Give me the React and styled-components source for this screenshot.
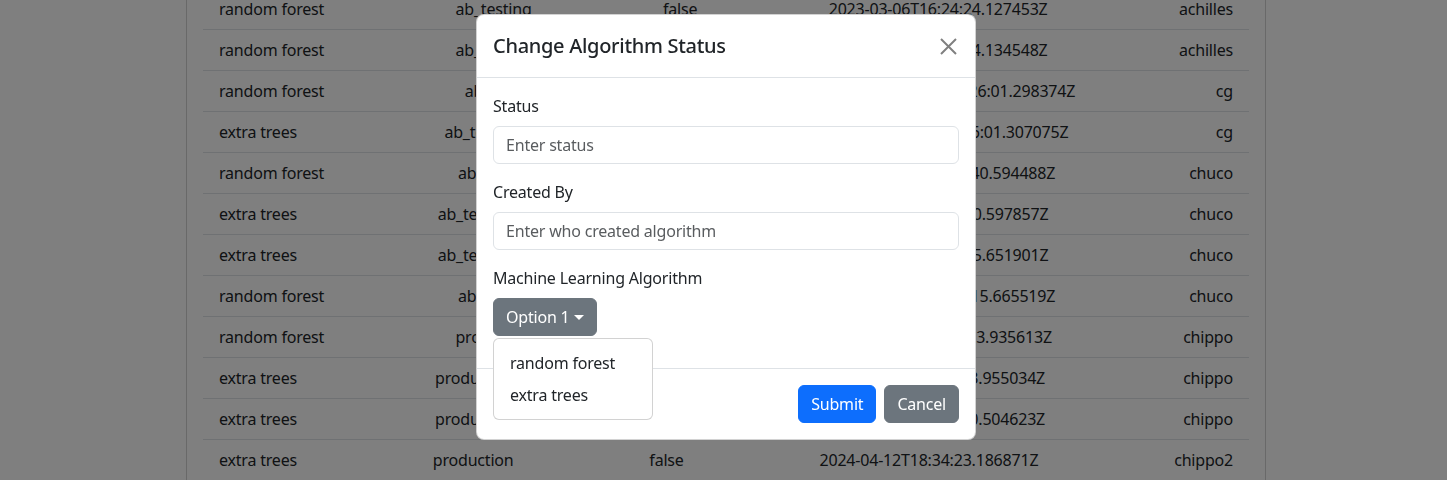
import styled, { createGlobalStyle } from 'styled-components';

const FONT = '"Noto Sans", "Liberation Sans", sans-serif';

const GlobalStyle = createGlobalStyle`
  * { box-sizing: border-box; }
  body {
    margin: 0;
    background: #fff;
    color: #212529;
    font-family: ${FONT};
    font-size: 16px;
    line-height: 24px;
    letter-spacing: -0.2px;
    overflow: hidden;
  }
`;

const Card = styled.div`
  width: 1080px;
  margin: -12px 0 0 186px;
  border: 1px solid rgba(0, 0, 0, 0.175);
  padding: 0 16px;
  background: #fff;
`;

const Row = styled.div`
  display: flex;
  justify-content: space-between;
  padding: 8px 16px;
  border-bottom: 1px solid #dee2e6;
  white-space: nowrap;
`;

const Backdrop = styled.div`
  position: fixed;
  inset: 0;
  background: rgba(0, 0, 0, 0.5);
`;

const Modal = styled.div`
  position: fixed;
  top: 14px;
  left: 476px;
  width: 500px;
  background: #fff;
  border: 1px solid rgba(0, 0, 0, 0.175);
  border-radius: 8px;
`;

const Header = styled.div`
  display: flex;
  align-items: center;
  justify-content: space-between;
  padding: 16px;
  border-bottom: 1px solid #dee2e6;
`;

const Title = styled.h5`
  margin: 0;
  font-size: 20px;
  line-height: 30px;
  font-weight: 500;
  letter-spacing: -0.3px;
`;

const CloseButton = styled.button`
  width: 24px;
  height: 24px;
  margin-right: -1px;
  padding: 0;
  border: 0;
  background: transparent;
  display: grid;
  place-items: center;
  cursor: pointer;
`;

const Body = styled.div`
  padding: 16px;
`;

const Group = styled.div`
  margin-bottom: 16px;
`;

const Label = styled.label`
  display: block;
  margin-bottom: 8px;
`;

const Input = styled.input`
  display: block;
  width: 100%;
  height: 38px;
  padding: 6px 12px;
  font: inherit;
  letter-spacing: inherit;
  color: #212529;
  border: 1px solid #dee2e6;
  border-radius: 6px;
  outline: none;

  &::placeholder {
    color: rgba(33, 37, 41, 0.75);
  }
`;

const Dropdown = styled.div`
  position: relative;
  display: inline-block;
`;

const Button = styled.button`
  display: inline-flex;
  align-items: center;
  height: 38px;
  padding: 6px 12px;
  font-family: ${FONT};
  font-size: 16px;
  line-height: 24px;
  letter-spacing: -0.2px;
  color: #fff;
  background: ${(p) => (p.variant === 'primary' ? '#0d6efd' : '#6c757d')};
  border: 1px solid ${(p) => (p.variant === 'primary' ? '#0d6efd' : '#6c757d')};
  border-radius: 6px;
  cursor: pointer;
`;

const Caret = styled.span`
  display: inline-block;
  margin-left: 4px;
  border-top: 5px solid #fff;
  border-left: 5px solid transparent;
  border-right: 5px solid transparent;
`;

const Menu = styled.ul`
  position: absolute;
  top: 40px;
  left: 0;
  z-index: 2;
  width: 160px;
  margin: 0;
  padding: 8px 0;
  list-style: none;
  background: #fff;
  border: 1px solid rgba(0, 0, 0, 0.175);
  border-radius: 6px;
`;

const MenuItem = styled.li`
  padding: 4px 16px;
  white-space: nowrap;
`;

const Footer = styled.div`
  display: flex;
  justify-content: flex-end;
  gap: 8px;
  padding: 16px;
  border-top: 1px solid #dee2e6;
`;

const rows = [
  ['random forest', 'ab_testing', 'false', '2023-03-06T16:24:24.127453Z', 'achilles'],
  ['random forest', 'ab_testing', 'false', '2023-03-06T16:24:24.134548Z', 'achilles'],
  ['random forest', 'ab_testing', 'false', '2023-03-06T16:26:01.298374Z', 'cg'],
  ['extra trees', 'ab_testing', 'false', '2023-03-06T16:26:01.307075Z', 'cg'],
  ['random forest', 'ab_testing', 'false', '2023-03-07T10:12:40.594488Z', 'chuco'],
  ['extra trees', 'ab_testing', 'false', '2023-03-07T10:12:40.597857Z', 'chuco'],
  ['extra trees', 'ab_testing', 'false', '2023-03-07T10:14:15.651901Z', 'chuco'],
  ['random forest', 'ab_testing', 'false', '2023-03-07T10:14:15.665519Z', 'chuco'],
  ['random forest', 'production', 'false', '2024-04-12T18:33:53.935613Z', 'chippo'],
  ['extra trees', 'production', 'false', '2024-04-12T18:33:53.955034Z', 'chippo'],
  ['extra trees', 'production', 'false', '2024-04-12T18:34:20.504623Z', 'chippo'],
  ['extra trees', 'production', 'false', '2024-04-12T18:34:23.186871Z', 'chippo2'],
];

export default function App() {
  return (
    <>
      <GlobalStyle />
      <Card>
        {rows.map((r, i) => (
          <Row key={i}>
            {r.map((c, j) => (
              <span key={j}>{c}</span>
            ))}
          </Row>
        ))}
      </Card>
      <Backdrop />
      <Modal>
        <Header>
          <Title>Change Algorithm Status</Title>
          <CloseButton aria-label="Close">
            <svg width="17" height="17" viewBox="0 0 17 17">
              <path d="M1 1L16 16M16 1L1 16" stroke="#808080" strokeWidth="2" />
            </svg>
          </CloseButton>
        </Header>
        <Body>
          <Group>
            <Label>Status</Label>
            <Input placeholder="Enter status" />
          </Group>
          <Group>
            <Label>Created By</Label>
            <Input placeholder="Enter who created algorithm" />
          </Group>
          <Group>
            <Label>Machine Learning Algorithm</Label>
            <Dropdown>
              <Button>
                Option 1<Caret />
              </Button>
              <Menu>
                <MenuItem>random forest</MenuItem>
                <MenuItem>extra trees</MenuItem>
              </Menu>
            </Dropdown>
          </Group>
        </Body>
        <Footer>
          <Button variant="primary">Submit</Button>
          <Button>Cancel</Button>
        </Footer>
      </Modal>
    </>
  );
}
